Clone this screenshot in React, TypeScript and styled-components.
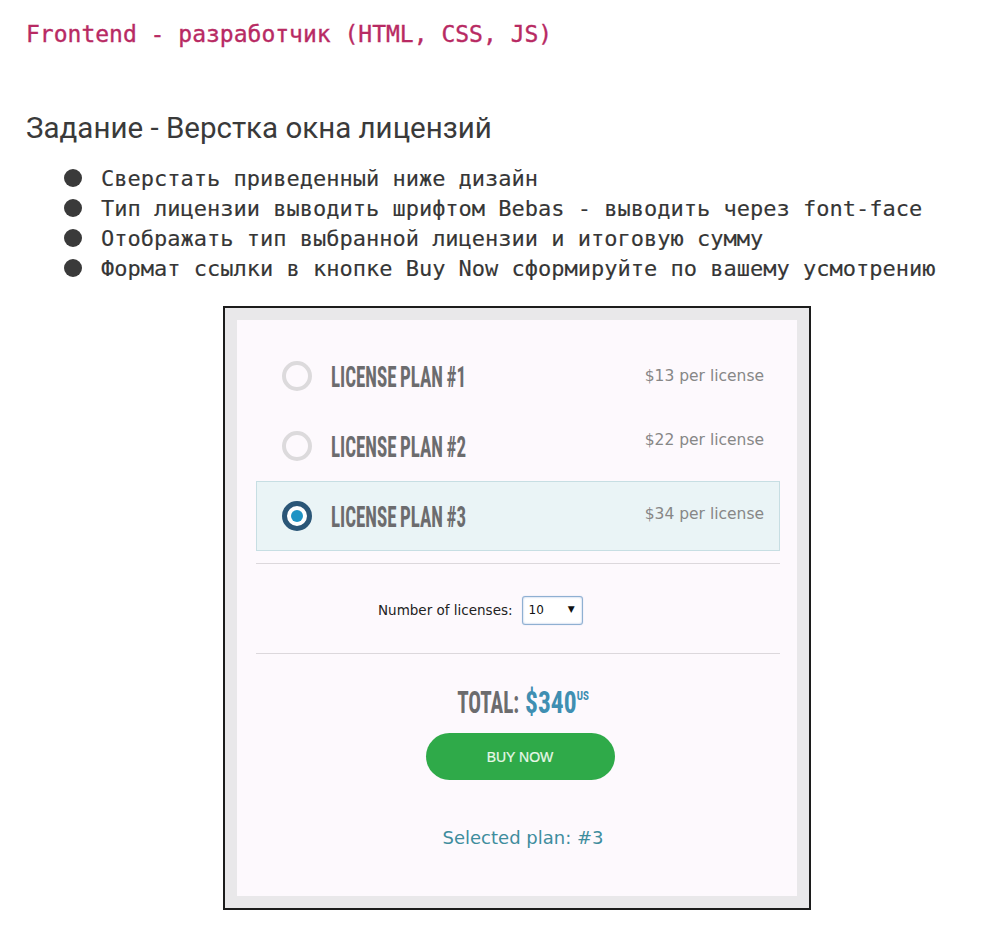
import React, { useState } from "react";
import styled, { createGlobalStyle } from "styled-components";

const Global = createGlobalStyle`
  html, body { margin: 0; padding: 0; background: #ffffff; }
  body { font-family: "DejaVu Sans", Verdana, sans-serif; }
`;

const Page = styled.div`
  padding: 19px 0 40px 26px;
`;

const Title = styled.h1`
  margin: 0;
  font-family: "DejaVu Sans Mono", monospace;
  font-size: 23px;
  line-height: 30px;
  font-weight: 400;
  color: #b82a63;
  -webkit-text-stroke: 0.35px #b82a63;
`;

const Heading = styled.h2`
  margin: 62px 0 0;
  font-family: Roboto, sans-serif;
  font-weight: 400;
  font-size: 29.5px;
  line-height: 34px;
  color: #3a3a3a;
`;

const Tasks = styled.ul`
  list-style: none;
  margin: 18px 0 0;
  padding: 0 0 0 38px;
`;

const Task = styled.li`
  display: flex;
  align-items: center;
  gap: 19px;
  height: 30px;
  font-family: "DejaVu Sans Mono", monospace;
  font-size: 22px;
  color: #363636;
  -webkit-text-stroke: 0.15px #363636;
  white-space: pre;
`;

const Dot = styled.span`
  width: 18px;
  height: 18px;
  border-radius: 50%;
  background: #3a3a3a;
  flex: none;
`;

const Card = styled.div`
  margin: 23px 0 0 197px;
  width: 588px;
  height: 604px;
  box-sizing: border-box;
  border: 2px solid #1c1c1c;
  background: #e9e8ea;
  padding: 12px;
`;

const Inner = styled.div`
  height: 100%;
  background: #fdf9fd;
  padding: 21px 17px 0 19px;
  box-sizing: border-box;
  display: flex;
  flex-direction: column;
`;

const PlanRow = styled.label<{ $active: boolean }>`
  display: flex;
  align-items: center;
  height: 70px;
  box-sizing: border-box;
  padding: 0 15px 0 25px;
  background: ${(p) => (p.$active ? "#eaf4f6" : "transparent")};
  border: 1px solid ${(p) => (p.$active ? "#c7dee3" : "transparent")};
  cursor: pointer;
`;

const Radio = styled.span<{ $checked: boolean }>`
  width: 30px;
  height: 30px;
  box-sizing: border-box;
  border-radius: 50%;
  flex: none;
  display: flex;
  align-items: center;
  justify-content: center;
  border: ${(p) => (p.$checked ? "5px solid #2b5677" : "4px solid #dcdadc")};
  background: ${(p) => (p.$checked ? "#ffffff" : "transparent")};
  &::after {
    content: "";
    width: 12px;
    height: 12px;
    border-radius: 50%;
    background: ${(p) => (p.$checked ? "#1f93c4" : "transparent")};
  }
`;

/* Condensed display caps (Bebas-like): width from font-size, height from scaleY about the baseline */
const Bebas = styled.span<{ $size: number; $stretch: number; $color: string }>`
  display: inline-block;
  font-family: Roboto, "Open Sans", sans-serif;
  font-stretch: 75%;
  font-weight: 700;
  font-size: ${(p) => p.$size}px;
  line-height: 1;
  color: ${(p) => p.$color};
  white-space: pre;
  transform-origin: 50% 84.2%;
  transform: scaleY(${(p) => p.$stretch});
`;

const PlanName = styled(Bebas)`
  margin: 8px 0 0 19px;
  word-spacing: -1px;
`;

const Price = styled.span<{ $lift: number }>`
  margin-left: auto;
  margin-bottom: ${(p) => p.$lift * 2}px;
  font-size: 15.5px;
  color: #878787;
`;

const Divider = styled.hr<{ $top?: number }>`
  margin: ${(p) => p.$top ?? 0}px 0 0;
  border: 0;
  height: 1px;
  background: #dcd8dc;
`;

const CountRow = styled.div`
  display: flex;
  align-items: center;
  height: 89px;
  box-sizing: border-box;
  padding: 3px 0 0 122px;
  gap: 9px;
  font-size: 13.5px;
  color: #222;
`;

const SelectWrap = styled.span`
  position: relative;
  display: inline-block;
`;

const CountSelect = styled.select`
  display: block;
  appearance: none;
  -webkit-appearance: none;
  width: 61px;
  height: 29px;
  box-sizing: border-box;
  border: 1px solid #8fb0d2;
  border-radius: 3px;
  box-shadow: inset 0 0 2px rgba(110, 150, 205, 0.7), 0 0 1px rgba(110, 150, 205, 0.5);
  background: #ffffff;
  padding: 0 0 0 6px;
  font-family: "DejaVu Sans", sans-serif;
  font-size: 12px;
  color: #111;
  outline: none;
`;

const Arrow = styled.span`
  position: absolute;
  right: 8px;
  top: 8px;
  font-size: 9px;
  color: #111;
  pointer-events: none;
`;

const TotalLine = styled.div`
  margin-top: 38px;
  height: 26px;
  display: flex;
  justify-content: center;
  align-items: baseline;
  padding-left: 10px;
`;

const TotalValue = styled(Bebas)`
  margin-left: 6px;
`;

const Currency = styled.sup`
  font-size: 11px;
  vertical-align: 10.3px;
  line-height: 1;
`;

const BuyButton = styled.a`
  align-self: center;
  margin: 15px 0 0 4px;
  width: 189px;
  height: 47px;
  border-radius: 24px;
  background: #2faa49;
  color: #e8f8e8;
  display: flex;
  align-items: center;
  justify-content: center;
  font-family: "Liberation Sans", Arial, sans-serif;
  font-size: 14px;
  -webkit-text-stroke: 0.2px #e8f8e8;
  text-decoration: none;
`;

const Selected = styled.div`
  margin-top: 46px;
  text-align: center;
  font-size: 18px;
  line-height: 24px;
  color: #3f8d9d;
  padding-left: 10px;
`;

const plans = [
  { id: 1, price: 13, lift: 0 },
  { id: 2, price: 22, lift: 6 },
  { id: 3, price: 34, lift: 2 },
];

const tasks = [
  "Сверстать приведенный ниже дизайн",
  "Тип лицензии выводить шрифтом Bebas - выводить через font-face",
  "Отображать тип выбранной лицензии и итоговую сумму",
  "Формат ссылки в кнопке Buy Now сформируйте по вашему усмотрению",
];

const GREY = "#6c6c6e";
const TEAL = "#3f8fb2";

export default function App() {
  const [plan, setPlan] = useState(3);
  const [count, setCount] = useState(10);
  const current = plans.find((p) => p.id === plan)!;
  const total = current.price * count;

  return (
    <Page>
      <Global />
      <Title>Frontend - разработчик (HTML, CSS, JS)</Title>
      <Heading>Задание - Верстка окна лицензий</Heading>
      <Tasks>
        {tasks.map((t) => (
          <Task key={t}>
            <Dot />
            {t}
          </Task>
        ))}
      </Tasks>
      <Card>
        <Inner>
          {plans.map((p) => (
            <PlanRow key={p.id} $active={plan === p.id} onClick={() => setPlan(p.id)}>
              <Radio $checked={plan === p.id} />
              <PlanName $size={19} $stretch={1.55} $color={GREY}>
                LICENSE PLAN #{p.id}
              </PlanName>
              <Price $lift={p.lift}>${p.price} per license</Price>
            </PlanRow>
          ))}
          <Divider $top={12} />
          <CountRow>
            <span>Number of licenses:</span>
            <SelectWrap>
              <CountSelect value={count} onChange={(e) => setCount(Number(e.target.value))}>
                {[1, 2, 3, 4, 5, 6, 7, 8, 9, 10, 15, 20, 50].map((n) => (
                  <option key={n} value={n}>
                    {n}
                  </option>
                ))}
              </CountSelect>
              <Arrow>▼</Arrow>
            </SelectWrap>
          </CountRow>
          <Divider />
          <TotalLine>
            <Bebas $size={21.2} $stretch={1.46} $color={GREY}>
              TOTAL:
            </Bebas>
            <TotalValue $size={25.5} $stretch={1.21} $color={TEAL}>
              ${total}
              <Currency>US</Currency>
            </TotalValue>
          </TotalLine>
          <BuyButton href={`#buy?plan=${plan}&count=${count}`}>BUY NOW</BuyButton>
          <Selected>Selected plan: #{plan}</Selected>
        </Inner>
      </Card>
    </Page>
  );
}
